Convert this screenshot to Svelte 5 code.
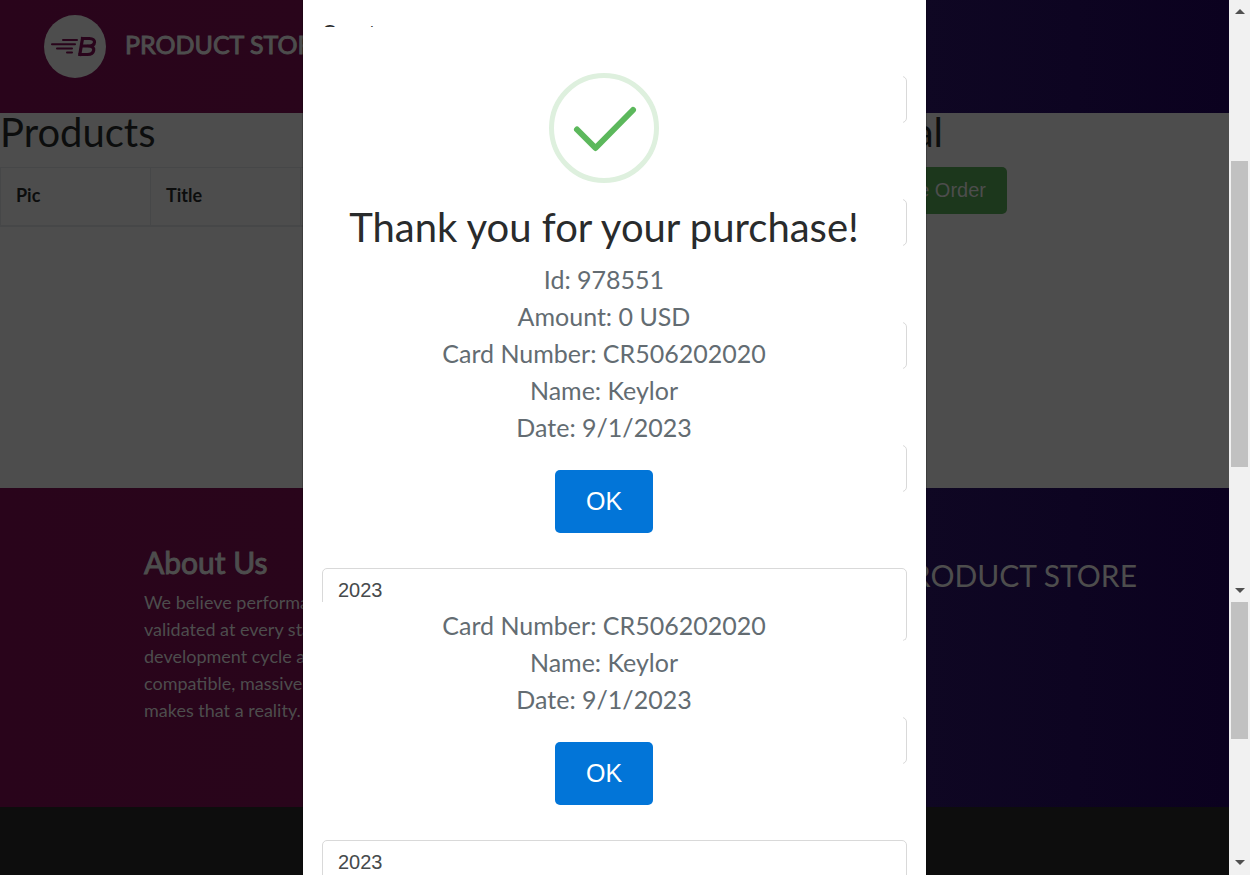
<script>
  const upperFields = ['City', 'Credit card', 'Name on card', 'Month'];
  const receipt = [
    'Id: 978551',
    'Amount: 0 USD',
    'Card Number: CR506202020',
    'Name: Keylor',
    'Date: 9/1/2023'
  ];
  const receiptEnd = receipt.slice(2);
</script>

<div class="screen">
  <div class="page">
    <header>
      <svg class="logo" viewBox="0 0 62 63" role="img" aria-label="Store logo">
        <ellipse cx="31" cy="31.500" rx="31" ry="31.500" fill="#4d4d4d" />
        <g stroke="#29041b" stroke-width="2" stroke-linecap="round" fill="none">
          <path d="M19 25H33M8 29.300H31M13 33.500H28M23 37.500H28" />
          <path
            d="M38.500 23.500L35.800 39.500M38.500 23.500H45.500C52.500 23.500 52 30.800 45 31H37.500M45 31C52.500 31.300 50.500 39.500 43.500 39.500H35.800"
            stroke-width="3.200"
            stroke-linecap="square"
          />
        </g>
      </svg>
      <strong class="brand">PRODUCT STORE</strong>
    </header>

    <main>
      <section class="products">
        <h2>Products</h2>
        <table>
          <thead>
            <tr><th>Pic</th><th>Title</th><th></th></tr>
          </thead>
        </table>
      </section>
      <section class="total">
        <h2>Total</h2>
        <button class="order" type="button">Place Order</button>
      </section>
    </main>

    <section class="about">
      <div class="about-text">
        <h3>About Us</h3>
        <p>
          We believe performance needs to be validated at every stage of the software development
          cycle and our open source compatible, massively scalable platform makes that a reality.
        </p>
      </div>
      <span class="about-brand">PRODUCT STORE</span>
    </section>
    <footer></footer>

    <div class="overlay">
      <div class="modal" role="dialog" aria-label="Order">
        <div class="label-strip"><label for="country">Country</label></div>

        <div class="pane upper">
          <div class="fields">
            {#each upperFields as name, i}
              <input id={i === 0 ? 'country' : undefined} aria-label={name} />
            {/each}
            <input aria-label="Year" value="2023" />
          </div>
          <div class="popup">
            <svg class="tick" viewBox="0 0 110 110" aria-hidden="true">
              <circle cx="55" cy="55" r="52.500" fill="none" stroke="#def0de" stroke-width="5" />
              <path
                d="M28 56.500L46.500 75L84 37"
                fill="none"
                stroke="#5cb85c"
                stroke-width="6"
                stroke-linecap="round"
                stroke-linejoin="round"
              />
            </svg>
            <h1>Thank you for your purchase!</h1>
            <div class="receipt">
              {#each receipt as line}<div>{line}</div>{/each}
            </div>
            <button class="ok" type="button">OK</button>
          </div>
        </div>

        <div class="pane lower">
          <div class="fields">
            <div class="field-end"></div>
            <input aria-label="Month" />
            <input aria-label="Year" value="2023" />
          </div>
          <div class="popup">
            <div class="receipt">
              {#each receiptEnd as line}<div>{line}</div>{/each}
            </div>
            <button class="ok" type="button">OK</button>
          </div>
        </div>
      </div>
    </div>
  </div>

  <div class="bars" aria-hidden="true">
    <div class="bar first">
      <i class="arrow up"></i>
      <div class="thumb"></div>
      <i class="arrow down"></i>
    </div>
    <div class="bar second">
      <div class="thumb"></div>
      <i class="arrow down"></i>
    </div>
  </div>
</div>

<style>
  :global(body) {
    margin: 0;
  }
  .screen {
    display: flex;
    height: 100vh;
    overflow: hidden;
    font-family: Lato, sans-serif;
    color: #0c0d0d;
  }
  .screen * {
    box-sizing: border-box;
  }
  h1,
  h2,
  h3,
  p {
    margin: 0;
  }
  .page {
    position: relative;
    flex: 1;
    min-width: 0;
    display: flex;
    flex-direction: column;
    background: #4d4d4d;
  }
  header,
  .about {
    background: linear-gradient(90deg, #29041b 0%, #29051b 25%, #0f0723 75%, #0b011f 100%);
    color: #4d4d4d;
  }
  header {
    display: flex;
    align-items: flex-start;
    gap: 19px;
    padding: 15px 44px 0;
    height: 113px;
    flex: none;
  }
  .logo {
    width: 62px;
    height: 63px;
  }
  .brand {
    font-size: 25px;
    line-height: 58px;
    font-weight: 400;
    -webkit-text-stroke: 1px currentColor;
  }
  main {
    display: flex;
    justify-content: space-between;
    height: 375px;
    flex: none;
  }
  .products {
    width: 66%;
  }
  h2 {
    font-size: 40px;
    line-height: 44px;
    font-weight: 400;
    margin: -3px 0 13px;
  }
  table {
    width: 100%;
    border-collapse: collapse;
  }
  th {
    width: 150px;
    height: 58px;
    padding: 0 15px 1px;
    border: 1px solid #464748;
    border-bottom-width: 2px;
    font-size: 18px;
    line-height: 27px;
    text-align: left;
  }
  th:last-child {
    width: auto;
  }
  .total {
    padding-right: 222px;
  }
  .order {
    height: 47px;
    padding: 0 21px 2px;
    border: 0;
    border-radius: 5px;
    background: #1c371c;
    color: #4d4d4d;
    font: 20px/30px 'Liberation Sans', Arial, sans-serif;
  }
  .about {
    display: flex;
    justify-content: space-between;
    align-items: flex-start;
    height: 319px;
    flex: none;
    padding: 56px 92px 0 144px;
  }
  .about-text {
    width: 350px;
  }
  h3 {
    font-size: 30px;
    line-height: 36px;
    margin-bottom: 9px;
    font-weight: 400;
    -webkit-text-stroke: 1px currentColor;
  }
  p {
    font-size: 18px;
    line-height: 27px;
  }
  .about-brand {
    font-size: 30px;
    line-height: 62px;
  }
  footer {
    flex: 1;
    background: #0d0d0d;
  }

  .overlay {
    position: absolute;
    inset: 0;
    display: flex;
    justify-content: center;
  }
  .modal {
    width: 623px;
    display: flex;
    flex-direction: column;
    background: #fff;
    box-shadow: 0 0 0 1px rgba(0, 0, 0, 0.2);
    color: #292b2c;
    overflow: hidden;
  }
  .label-strip {
    height: 27px;
    flex: none;
    overflow: hidden;
    padding: 16px 19px 0;
    font-size: 20px;
    line-height: 30px;
  }
  .pane {
    display: grid;
    grid-template-columns: 100%;
    overflow: hidden;
  }
  .upper {
    height: 575px;
    flex: none;
  }
  .lower {
    flex: 1;
    min-height: 0;
  }
  .fields,
  .popup {
    grid-area: 1 / 1;
    align-self: start;
  }
  .fields {
    display: flex;
    flex-direction: column;
    gap: 76px;
    padding: 49px 19px 0;
  }
  .lower .fields {
    padding-top: 0;
  }
  input,
  .field-end {
    width: 100%;
    height: 47px;
    flex: none;
    padding: 0 15px 2px;
    border: 1px solid #d9d9d9;
    border-radius: 5px;
    background: #fff;
    color: #464a4c;
    font: 20px/25px 'Liberation Sans', Arial, sans-serif;
  }
  .field-end {
    height: 39px;
    border-top: 0;
    border-radius: 0 0 5px 5px;
  }
  .popup {
    z-index: 1;
    display: flex;
    flex-direction: column;
    align-items: center;
    margin: 0 23px 0 2px;
    padding: 46px 0 10px;
    background: #fff;
    text-align: center;
  }
  .lower .popup {
    padding-top: 5px;
  }
  .tick {
    width: 110px;
    height: 110px;
  }
  h1 {
    margin: 22px 0 12px;
    font-size: 40px;
    line-height: 44px;
    font-weight: 400;
    white-space: nowrap;
  }
  .receipt {
    font-size: 25px;
    line-height: 37px;
    color: #636c72;
  }
  .ok {
    width: 98px;
    height: 63px;
    margin-top: 24px;
    padding: 0 0 2px;
    border: 0;
    border-radius: 5px;
    background: #0275d8;
    color: #fff;
    font: 25px/38px 'Liberation Sans', Arial, sans-serif;
  }

  .bars {
    width: 21px;
    flex: none;
    display: flex;
    flex-direction: column;
    background: #f1f1f1;
  }
  .bar {
    display: flex;
    flex-direction: column;
    align-items: center;
  }
  .first {
    height: 602px;
    padding: 9px 0;
  }
  .second {
    flex: 1;
    padding-bottom: 10px;
  }
  .thumb {
    width: 17px;
    height: 306px;
    background: #c1c1c1;
  }
  .first .thumb {
    margin-top: 147px;
  }
  .second .thumb {
    height: 137px;
  }
  .arrow {
    border: 5px solid transparent;
  }
  .up {
    border-top: 0;
    border-bottom-color: #505050;
  }
  .down {
    margin-top: auto;
    border-bottom: 0;
    border-top-color: #505050;
  }
</style>
